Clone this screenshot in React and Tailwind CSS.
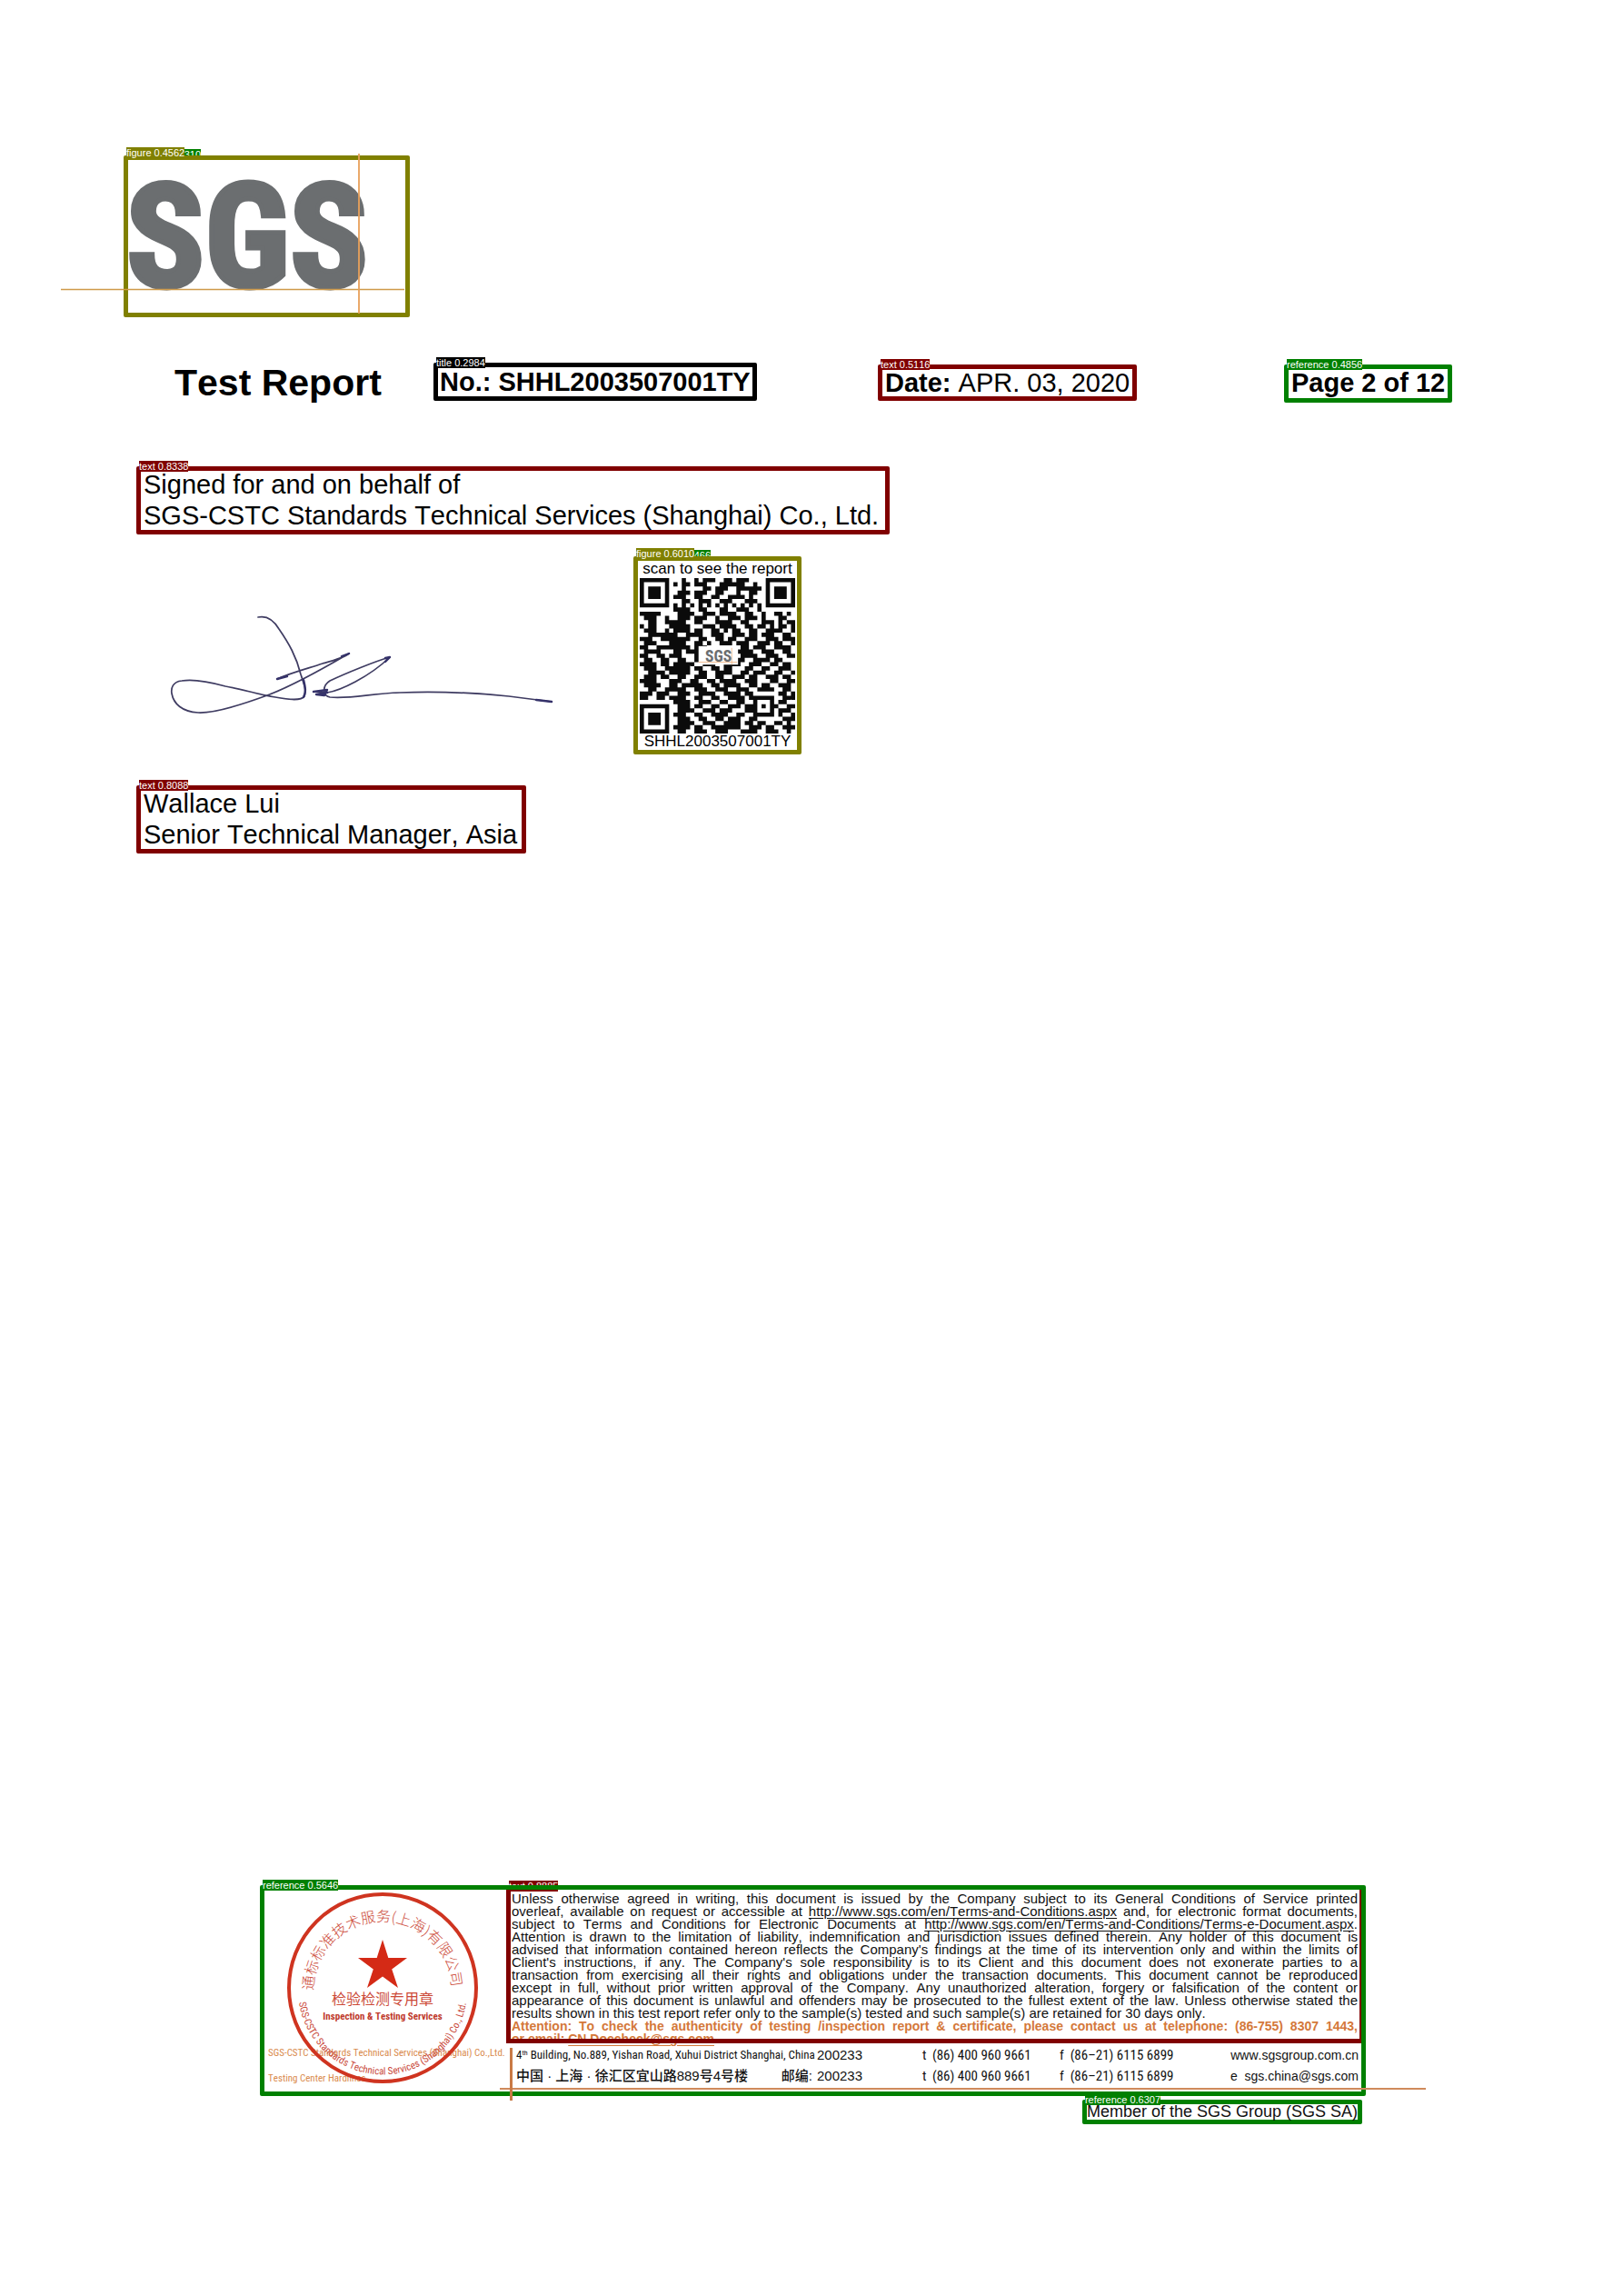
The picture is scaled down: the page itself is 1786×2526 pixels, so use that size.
import React from "react";

const BOX = {
  olive: "border-[#808000]",
  black: "border-black",
  maroon: "border-[#800000]",
  green: "border-[#008000]",
};
const TAG = {
  olive: "bg-[#808000]",
  black: "bg-black",
  maroon: "bg-[#800000]",
  green: "bg-[#008000]",
};

function Region({ tone, label, tall, className = "", children }) {
  return (
    <div className={`relative rounded-[2px] border-[5px] ${BOX[tone]} ${className}`}>
      <span
        className={`absolute -left-[2px] z-20 whitespace-nowrap text-[11px] leading-[12px] text-white ${
          tall ? "-top-[14px]" : "-top-[11px]"
        } ${TAG[tone]}`}
      >
        {label}
      </span>
      {children}
    </div>
  );
}

function BackTag({ text, className }) {
  return (
    <span className={`absolute whitespace-nowrap text-right text-[11px] leading-[12px] text-white ${className}`}>
      {text}
    </span>
  );
}

function Logo() {
  return (
    <svg viewBox="0 0 384 187" className="absolute -left-[74px] -top-[12px] h-[187px] w-[384px]" role="img" aria-label="SGS">
      <text
        x="72"
        y="151"
        fontSize="160"
        fontWeight="700"
        fill="#6b6e70"
        stroke="#6b6e70"
        strokeWidth="5"
        fontFamily="'Roboto Condensed', 'Liberation Sans', sans-serif"
      >
        SGS
      </text>
      <path d="M0 154.5H378" stroke="#cf9a4a" strokeWidth="1.4" />
      <path d="M328 5V181" stroke="#e8a05a" strokeWidth="1.8" />
    </svg>
  );
}

const QR = [
  "1111111000100101110011011100001111111",
  "1000001010110111000111111001001000001",
  "1011101000100001101110011111101011101",
  "1011101001110111001100010011001011101",
  "1011101011100110011001111010001011101",
  "1000001000110011100111000111001000001",
  "1111111010101010101010101010101111111",
  "0000000011110011000110011100100000000",
  "1111100001111001110111100110010011010",
  "0111001001110111001001110111010001100",
  "0011001111100110001111001100011101011",
  "1011000111110001110111100110110101101",
  "0111001011110110011010110011001111001",
  "0011111110011110011100111011011100110",
  "1110011111110011001101100111001110111",
  "0111000111100110100111011100111011001",
  "1100111111110111000000001101110011110",
  "0111100011011110000000011110011100110",
  "1100110111000110000000001111001110011",
  "0110011001100111000000111001111011000",
  "1111011011111001110011110011100110110",
  "0111001111110110011011000110011001110",
  "0011110111110011001111001101110011001",
  "0111011001100111001100111011001110110",
  "1111000111001100110111100111000110011",
  "0111100110111110011011110011011001110",
  "0011001111100111001110011100111100110",
  "1110111001110011110011110110000001101",
  "1100110111100110011001111011111100111",
  "0000000011110011100110011001000101100",
  "1111111001110110011001110111010110011",
  "1000001001111001110111000111000101110",
  "1011101011100110011110011001111101001",
  "1011101001110011001101110011000000111",
  "1011101001111001110011110110110011010",
  "1000001011110110011111110011101100111",
  "1111111001100111001110001111001110010",
];

function QrCode() {
  const d = QR.map((row, y) =>
    row
      .split("")
      .map((c, x) => (c === "1" ? `M${x} ${y}h1v1h-1z` : ""))
      .join("")
  ).join("");
  return (
    <svg viewBox="0 0 37 37" className="h-[171px] w-[171px]" role="img" aria-label="QR code">
      <path d={d} fill="#0b0b0b" />
      <rect x="14" y="16.2" width="9.4" height="4.4" fill="#fff" />
      <path d="M14 20H23.2M21.9 16.6V20.6" stroke="#efb78a" strokeWidth="0.2" />
      <text x="15.6" y="19.9" fontSize="3.8" fontWeight="700" fill="#6b6e70" fontFamily="'Roboto Condensed', 'Liberation Sans', sans-serif">
        SGS
      </text>
    </svg>
  );
}

function Signature() {
  return (
    <svg viewBox="0 0 480 160" className="h-[160px] w-[480px]" fill="none" strokeLinecap="round" strokeLinejoin="round" role="img" aria-label="Signature">
      <g stroke="#3f3c62" strokeWidth="1.7">
        <path d="M124 39C133 37 141 42 147 52C158 68 166 82 171 102C175 114 177 119 175 126C171 132 154 129 143 127C124 124 106 118 88 115C70 110 52 107 40 109C30 110 28 117 29 123C31 134 40 143 58 144C76 145 104 136 134 125C164 114 200 93 224 79C218 84 206 87 195 90C180 95 160 100 145 107" />
        <path d="M185 121L200 122C214 120 246 105 269 83C254 87 220 101 203 109C195 114 194 125 203 127C228 129 246 123 280 122C330 120 370 123 400 126L447 132" />
      </g>
      <path d="M174 108C176 116 177 121 174 127M185 121L200 119L197 125L188 124L200 122M145 107L156 104M216 82L224 79M264 84L269 83L264 88M430 130L447 132" stroke="#35326a" strokeWidth="2.4" />
    </svg>
  );
}

function Stamp() {
  const cn = "'Noto Sans CJK SC', sans-serif";
  const en = "'Roboto Condensed', 'Liberation Sans', sans-serif";
  return (
    <svg viewBox="0 0 212 212" className="absolute left-[24px] top-[2px] h-[212px] w-[212px]" role="img" aria-label="Inspection and Testing Services stamp">
      <circle cx="106" cy="106" r="103" fill="none" stroke="#cf3420" strokeWidth="4" />
      <path d="M106 53L112.300 73H133L116.200 85.500L123 106L106 93.600L89 106L95.800 85.500L79 73H99.700Z" fill="#d42a16" />
      <path id="stamp-top" d="M30 109A76 76 0 0 1 182 109" fill="none" />
      <path id="stamp-bottom" d="M14 122A93 93 0 0 0 198 122" fill="none" />
      <text fontSize="16" fontWeight="300" fill="#cc4a38" fontFamily={cn}>
        <textPath href="#stamp-top">通标标准技术服务(上海)有限公司</textPath>
      </text>
      <text fontSize="11" fill="#c9493a" fontFamily={en}>
        <textPath href="#stamp-bottom">SGS-CSTC Standards Technical Services (Shanghai) Co., Ltd.</textPath>
      </text>
      <text x="106" y="124" fontSize="16" textAnchor="middle" fill="#cc4a38" fontFamily={cn}>
        检验检测专用章
      </text>
      <text x="106" y="141" fontSize="11" fontWeight="700" textAnchor="middle" fill="#c03a2c" fontFamily={en}>
        Inspection &amp; Testing Services
      </text>
    </svg>
  );
}

const A = ({ children, href }) => (
  <a href={href} className="underline underline-offset-2">
    {children}
  </a>
);

const TERMS = [
  "Unless otherwise agreed in writing, this document is issued by the Company subject to its General Conditions of Service printed",
  <>
    overleaf, available on request or accessible at <A href="#terms">http://www.sgs.com/en/Terms-and-Conditions.aspx</A> and, for electronic format documents,
  </>,
  <>
    subject to Terms and Conditions for Electronic Documents at <A href="#e-document">http://www.sgs.com/en/Terms-and-Conditions/Terms-e-Document.aspx</A>.
  </>,
  "Attention is drawn to the limitation of liability, indemnification and jurisdiction issues defined therein. Any holder of this document is",
  "advised that information contained hereon reflects the Company's findings at the time of its intervention only and within the limits of",
  "Client's instructions, if any. The Company's sole responsibility is to its Client and this document does not exonerate parties to a",
  "transaction from exercising all their rights and obligations under the transaction documents. This document cannot be reproduced",
  "except in full, without prior written approval of the Company. Any unauthorized alteration, forgery or falsification of the content or",
  "appearance of this document is unlawful and offenders may be prosecuted to the fullest extent of the law. Unless otherwise stated the",
];

function ContactRow({ address, code, last }) {
  return (
    <div className="grid h-[24px] grid-cols-[331px_116px_151px_1fr] items-center whitespace-nowrap pl-[11px] pr-[3px] text-[15px] leading-[24px]">
      <div>{address}</div>
      <div>{code}</div>
      <div className="grid grid-cols-[11px_1fr] font-['Roboto_Condensed','Liberation_Sans',sans-serif]">
        <span>t</span>
        <span>(86) 400 960 9661</span>
      </div>
      <div className="flex justify-between">
        <span className="font-['Roboto_Condensed','Liberation_Sans',sans-serif]">f&nbsp; (86–21) 6115 6899</span>
        <span className="text-[14px]">{last}</span>
      </div>
    </div>
  );
}

export default function App() {
  return (
    <main className="w-full bg-white pb-[189px] pt-[171px] font-['Liberation_Sans','Noto_Sans_CJK_SC',Arial,sans-serif] text-black [font-kerning:none]">
      <div className="relative ml-[136px] w-[315px]">
        <BackTag text="310" className="-top-[7px] left-[65px] w-[20px] bg-[#008000]" />
        <Region tone="olive" label="figure 0.4562" tall className="h-[178px]">
          <Logo />
        </Region>
      </div>

      <header className="mt-[50px] grid grid-cols-[285px_489px_447px_1fr] items-start whitespace-nowrap pl-[192px] text-[29px] leading-[32px]">
        <h1 className="pt-[2px] text-[41px] font-bold leading-[40px]">Test Report</h1>
        <Region tone="black" label="title 0.2984" className="h-[42px] w-fit px-[2px]">
          <strong>No.: SHHL2003507001TY</strong>
        </Region>
        <Region tone="maroon" label="text 0.5116" className="mt-[2px] h-[40px] w-fit px-[3px] leading-[30px]">
          <strong>Date:</strong> APR. 03, 2020
        </Region>
        <Region tone="green" label="reference 0.4856" className="mt-[2px] h-[42px] w-fit px-[3px] leading-[30px]">
          <strong>Page 2 of 12</strong>
        </Region>
      </header>

      <section className="ml-[150px] mt-[70px] text-[29px] leading-[34px]">
        <Region tone="maroon" label="text 0.8338" className="h-[75px] w-fit whitespace-nowrap pl-[3px] pr-[7px]">
          <div className="-mt-[2px]">
            <p>Signed for and on behalf of</p>
            <p>SGS-CSTC Standards Technical Services (Shanghai) Co., Ltd.</p>
          </div>
        </Region>
        <div className="mt-[24px] flex items-start gap-[57px] pl-[10px]">
          <div className="pt-[28px]">
            <Signature />
          </div>
          <div className="relative">
            <BackTag text="466" className="-top-[7px] left-[65px] w-[20px] bg-[#008000]" />
            <Region tone="olive" label="figure 0.6010" tall className="h-[218px] w-[185px] text-[17px]">
              <div className="flex flex-col items-center whitespace-nowrap">
                <span className="h-[19px] leading-[18px]">scan to see the report</span>
                <QrCode />
                <span className="h-[18px] leading-[18px]">SHHL2003507001TY</span>
              </div>
            </Region>
          </div>
        </div>
        <Region tone="maroon" label="text 0.8088" className="mt-[34px] h-[75px] w-fit whitespace-nowrap pl-[3px] pr-[5px]">
          <div className="-mt-[2px]">
            <p>Wallace Lui</p>
            <p>Senior Technical Manager, Asia</p>
          </div>
        </Region>
      </section>

      <footer className="relative ml-[286px] mr-[283px] mt-[1135px]">
        <BackTag text="text 0.8885" className="-top-[5px] left-[274px] bg-[#800000]" />
        <Region tone="green" label="reference 0.5646" className="h-[232px]">
          <div className="flex">
            <div className="relative h-[222px] w-[266px] shrink-0 whitespace-nowrap text-[#d98a4c]">
              <div className="pl-[4px] pt-[166px] font-['Roboto_Condensed','Liberation_Sans',sans-serif] text-[11px] leading-[28px]">
                <p>SGS-CSTC Standards Technical Services (Shanghai) Co.,Ltd.</p>
                <p>Testing Center Hardlines</p>
              </div>
              <Stamp />
            </div>
            <div className="relative min-w-0 flex-1">
              <div className="relative h-[169px] border-l-[5px] border-r-2 border-[#800000] pb-[5px] pl-px pr-[2px] pt-[3px] text-[15px] leading-[14px] text-[#111] after:absolute after:inset-x-0 after:bottom-0 after:h-[5px] after:bg-[#800000] after:content-['']">
                {TERMS.map((line, i) => (
                  <p key={i} className="whitespace-nowrap text-justify [text-align-last:justify]">
                    {line}
                  </p>
                ))}
                <p className="whitespace-nowrap">results shown in this test report refer only to the sample(s) tested and such sample(s) are retained for 30 days only.</p>
                <p className="whitespace-nowrap text-justify text-[14px] font-bold text-[#d4783a] [text-align-last:justify]">
                  Attention: To check the authenticity of testing /inspection report &amp; certificate, please contact us at telephone: (86-755) 8307 1443,
                </p>
                <p className="whitespace-nowrap text-[14px] font-bold text-[#d4783a]">
                  or email: <A href="mailto:CN.Doccheck@sgs.com">CN.Doccheck@sgs.com</A>
                </p>
              </div>
              <div className="text-[#111]">
                <ContactRow
                  address={
                    <span className="font-['Roboto_Condensed','Liberation_Sans',sans-serif] text-[13px]">
                      4<sup className="text-[8px]">th</sup> Building, No.889, Yishan Road, Xuhui District Shanghai, China
                    </span>
                  }
                  code="200233"
                  last={<a href="#website">www.sgsgroup.com.cn</a>}
                />
                <ContactRow
                  address={
                    <span className="flex justify-between pr-[5px]">
                      <span className="font-medium">中国 · 上海 · 徐汇区宜山路889号4号楼</span>
                      <span className="font-medium">邮编:</span>
                    </span>
                  }
                  code="200233"
                  last={<a href="mailto:sgs.china@sgs.com">e&nbsp; sgs.china@sgs.com</a>}
                />
              </div>
              <span className="absolute -right-[71px] bottom-[2px] left-[-7px] h-[2px] bg-[#cf8a5c]" />
              <span className="absolute -bottom-[10px] left-[4px] h-[58px] w-[3px] bg-[#c97a45]" />
            </div>
          </div>
        </Region>
        <div className="mt-[4px] flex justify-end pr-[4px]">
          <Region tone="green" label="reference 0.6307" className="h-[27px] whitespace-nowrap text-[18px] leading-[17px] text-[#111]">
            Member of the SGS Group (SGS SA)
          </Region>
        </div>
      </footer>
    </main>
  );
}
